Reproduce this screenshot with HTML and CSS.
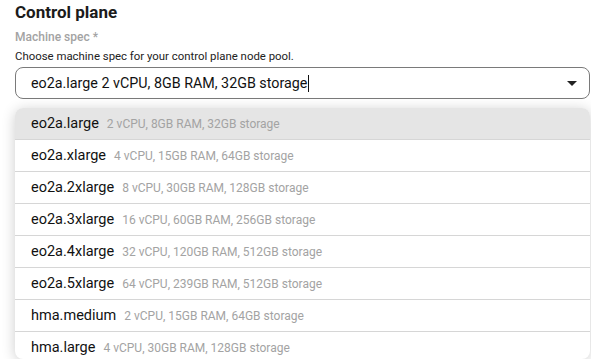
FILE: index.html
```html
<!DOCTYPE html>
<html lang="en">
<head>
    <meta charset="UTF-8">
    <meta name="viewport" content="width=device-width, initial-scale=1.0">
    <title>Control plane</title>
    <link rel="stylesheet" href="styles.css">
</head>
<body>
    <div class="section">
        <h2>Control plane</h2>
        <div class="label">Machine spec *</div>
        <div class="hint">Choose machine spec for your control plane node pool.</div>

        <div class="select">
            <div class="select-value">eo2a.large 2 vCPU, 8GB RAM, 32GB storage<span class="caret"></span></div>
            <svg class="arrow" width="10" height="5" viewBox="0 0 10 5"><path d="M0 0h10L5 5z" fill="#222"/></svg>
        </div>

        <ul class="menu">
            <li class="active"><span class="name">eo2a.large</span><span class="spec">2 vCPU, 8GB RAM, 32GB storage</span></li>
            <li><span class="name">eo2a.xlarge</span><span class="spec">4 vCPU, 15GB RAM, 64GB storage</span></li>
            <li><span class="name">eo2a.2xlarge</span><span class="spec">8 vCPU, 30GB RAM, 128GB storage</span></li>
            <li><span class="name">eo2a.3xlarge</span><span class="spec">16 vCPU, 60GB RAM, 256GB storage</span></li>
            <li><span class="name">eo2a.4xlarge</span><span class="spec">32 vCPU, 120GB RAM, 512GB storage</span></li>
            <li><span class="name">eo2a.5xlarge</span><span class="spec">64 vCPU, 239GB RAM, 512GB storage</span></li>
            <li><span class="name">hma.medium</span><span class="spec">2 vCPU, 15GB RAM, 64GB storage</span></li>
            <li><span class="name">hma.large</span><span class="spec">4 vCPU, 30GB RAM, 128GB storage</span></li>
        </ul>
    </div>
</body>
</html>
```

FILE: styles.css
```css
* {
    margin: 0;
    padding: 0;
    box-sizing: border-box;
    font-family: Roboto, 'Liberation Sans', sans-serif;
}

body {
    background: white;
    overflow: hidden;
}

.section {
    padding: 2px 1px 0 15px;
}

h2 {
    font-size: 17px;
    font-weight: bold;
    color: #1b1b1b;
    line-height: 20px;
}

.label {
    margin-top: 8px;
    font-size: 12px;
    font-weight: 500;
    color: #a3a3a3;
    line-height: 15px;
}

.hint {
    margin-top: 4px;
    font-size: 11.4px;
    color: #222;
    line-height: 14px;
}

.select {
    margin-top: 4px;
    height: 32px;
    border: 1px solid #7a7a7a;
    border-radius: 8px;
    display: flex;
    align-items: center;
    justify-content: space-between;
    padding: 0 12px 0 15px;
}

.select-value {
    font-size: 14.3px;
    color: #111;
    display: flex;
    align-items: center;
}

.caret {
    display: inline-block;
    width: 1px;
    height: 17px;
    background: #111;
    margin-left: 1px;
}

.menu {
    list-style: none;
    margin-top: 9px;
    height: 251px;
    overflow: hidden;
    background: white;
    border-radius: 8px;
    box-shadow: 0 2px 14px rgba(0,0,0,0.2);
}

.menu li {
    height: 32px;
    display: flex;
    align-items: center;
    gap: 8px;
    padding-left: 16px;
    border-bottom: 1px solid #d6d6d6;
}

.menu li.active {
    background: #e5e5e5;
}

.name {
    font-size: 14.5px;
    color: #111;
}

.spec {
    font-size: 12px;
    color: #a3a3a3;
}
```
